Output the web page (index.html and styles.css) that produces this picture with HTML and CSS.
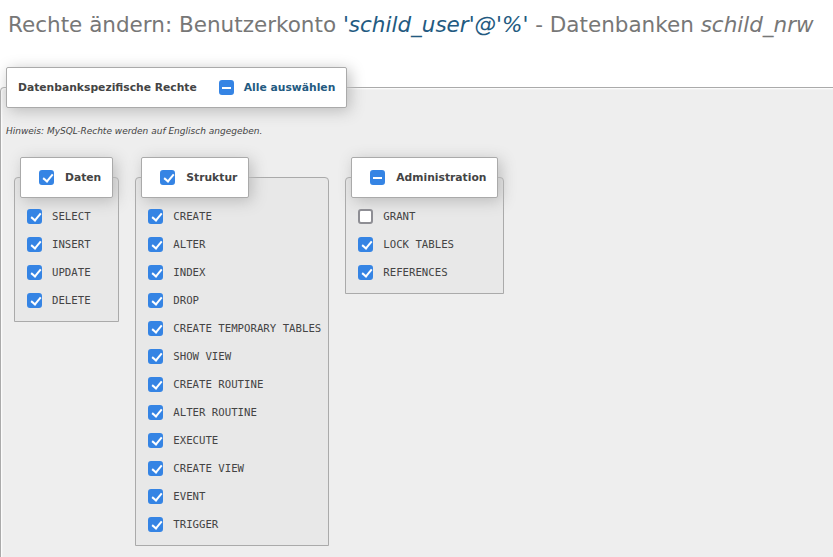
FILE: index.html
```html
<!DOCTYPE html>
<html lang="de">
<head>
  <meta charset="UTF-8" />
  <title>Rechte ändern</title>
  <meta name="viewport" content="width=device-width, initial-scale=1.0" />
  <link rel="stylesheet" href="styles.css">
</head>
<body>
  <h2 class="page-title">Rechte ändern: Benutzerkonto <em class="acct">'schild_user'@'%'</em> - Datenbanken <em>schild_nrw</em></h2>

  <form id="privForm">
    <fieldset class="rights">
      <legend>
        <div class="legend-row">
          <span>Datenbankspezifische Rechte</span>
          <input type="checkbox" class="cb mixed" id="selectAll">
          <label for="selectAll" class="select-all">Alle auswählen</label>
        </div>
      </legend>

      <p class="hint">Hinweis: MySQL-Rechte werden auf Englisch angegeben.</p>

      <div class="groups">
        <fieldset class="group">
          <legend>
            <div class="legend-row inner">
              <input type="checkbox" class="cb" checked> <span>Daten</span>
            </div>
          </legend>
          <label class="priv"><input type="checkbox" class="cb" checked> SELECT</label>
          <label class="priv"><input type="checkbox" class="cb" checked> INSERT</label>
          <label class="priv"><input type="checkbox" class="cb" checked> UPDATE</label>
          <label class="priv"><input type="checkbox" class="cb" checked> DELETE</label>
        </fieldset>

        <fieldset class="group">
          <legend>
            <div class="legend-row inner">
              <input type="checkbox" class="cb" checked> <span>Struktur</span>
            </div>
          </legend>
          <label class="priv"><input type="checkbox" class="cb" checked> CREATE</label>
          <label class="priv"><input type="checkbox" class="cb" checked> ALTER</label>
          <label class="priv"><input type="checkbox" class="cb" checked> INDEX</label>
          <label class="priv"><input type="checkbox" class="cb" checked> DROP</label>
          <label class="priv"><input type="checkbox" class="cb" checked> CREATE TEMPORARY TABLES</label>
          <label class="priv"><input type="checkbox" class="cb" checked> SHOW VIEW</label>
          <label class="priv"><input type="checkbox" class="cb" checked> CREATE ROUTINE</label>
          <label class="priv"><input type="checkbox" class="cb" checked> ALTER ROUTINE</label>
          <label class="priv"><input type="checkbox" class="cb" checked> EXECUTE</label>
          <label class="priv"><input type="checkbox" class="cb" checked> CREATE VIEW</label>
          <label class="priv"><input type="checkbox" class="cb" checked> EVENT</label>
          <label class="priv"><input type="checkbox" class="cb" checked> TRIGGER</label>
        </fieldset>

        <fieldset class="group">
          <legend>
            <div class="legend-row inner">
              <input type="checkbox" class="cb mixed"> <span>Administration</span>
            </div>
          </legend>
          <label class="priv"><input type="checkbox" class="cb"> GRANT</label>
          <label class="priv"><input type="checkbox" class="cb" checked> LOCK TABLES</label>
          <label class="priv"><input type="checkbox" class="cb" checked> REFERENCES</label>
        </fieldset>
      </div>
    </fieldset>
  </form>
</body>
</html>
```

FILE: styles.css
```css
* { box-sizing: border-box; }

html { overflow: hidden; }

body {
  margin: 0;
  font-family: "DejaVu Sans", sans-serif;
  color: #444;
  background: #fff;
}

.page-title {
  margin: 0;
  padding: 12px 0 0 8px;
  font-size: 21.5px;
  font-weight: normal;
  line-height: 25px;
  color: #777;
}

.page-title .acct { color: #235a81; }

form { margin: 0; }

/* outer fieldset */
.rights {
  margin: 30px -30px 0 0;
  padding: 18px 5px 60px;
  min-width: 0;
  border: 1px solid #aaa;
  border-radius: 4px 4px 0 0;
  background: #eee;
  box-shadow: 1px 1px 2px #fff inset;
}

legend {
  padding: 12px 11px;
  border: 1px solid #aaa;
  border-radius: 2px;
  background: #fff;
  box-shadow: 3px 3px 15px #bbb;
  font-size: 10.75px;
  font-weight: bold;
  line-height: 15px;
  color: #444;
}

.legend-row {
  display: flex;
  align-items: center;
}

.legend-row .cb { margin-left: 22px; }

.select-all {
  margin-left: 10px;
  color: #235a81;
  cursor: pointer;
}

.hint {
  margin: 0;
  font-size: 9px;
  font-style: italic;
  line-height: 11px;
}

.groups {
  display: flex;
  align-items: flex-start;
  gap: 16px;
  margin-top: 20px;
  padding-left: 8px;
}

/* inner fieldsets */
.group {
  margin: 0;
  padding: 4px 5px 7px;
  min-width: 0;
  border: 1px solid #aaa;
  border-radius: 4px 4px 0 0;
  background: #e8e8e8;
}

.group legend { padding-left: 18px; }

.legend-row.inner .cb { margin: 0 11px 0 0; }

.priv {
  display: flex;
  align-items: center;
  height: 28px;
  padding: 0 2px 0 7px;
  font-family: "DejaVu Sans Mono", monospace;
  font-size: 10.7px;
  white-space: nowrap;
  color: #444;
}

.priv .cb { margin-right: 10px; }

/* checkboxes */
.cb {
  appearance: none;
  -webkit-appearance: none;
  position: relative;
  flex: none;
  width: 15px;
  height: 15px;
  margin: 0;
  border: 2px solid #8e8e94;
  border-radius: 3px;
  background: #fff;
}

.cb:checked,
.cb.mixed {
  border-color: #3584e4;
  background: #3584e4;
}

.cb:checked::after {
  content: "";
  position: absolute;
  left: 3.5px;
  top: 0px;
  width: 4px;
  height: 8px;
  border: solid #fff;
  border-width: 0 2.2px 2.2px 0;
  transform: rotate(40deg);
}

.cb.mixed::after {
  content: "";
  position: absolute;
  left: 1px;
  top: 4.5px;
  width: 9px;
  height: 2px;
  background: #fff;
}
```
